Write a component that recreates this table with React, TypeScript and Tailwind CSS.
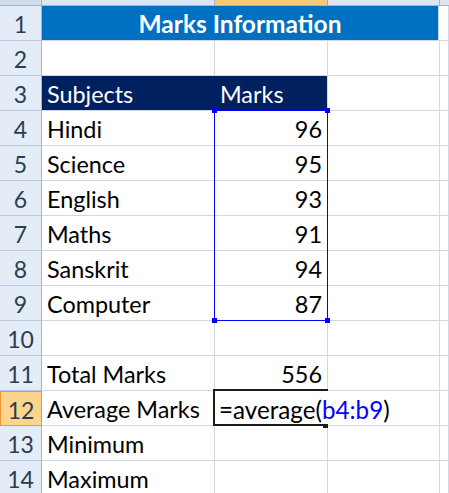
import React from "react";

const font = { fontFamily: "Lato, 'Open Sans', sans-serif" };

type Row = { n: number; a?: string; b?: string };

const rows: Row[] = [
  { n: 4, a: "Hindi", b: "96" },
  { n: 5, a: "Science", b: "95" },
  { n: 6, a: "English", b: "93" },
  { n: 7, a: "Maths", b: "91" },
  { n: 8, a: "Sanskrit", b: "94" },
  { n: 9, a: "Computer", b: "87" },
  { n: 10 },
  { n: 11, a: "Total Marks", b: "556" },
];

function RowHead({ n, active }: { n: number; active?: boolean }) {
  return (
    <div
      className={
        active
          ? "w-[42px] h-[35px] shrink-0 flex items-end justify-center pb-[3px] text-[23px] leading-none bg-[#fdd48c] border border-[#f29436] text-[#2b3d4f]"
          : "w-[42px] h-[35px] shrink-0 flex items-end justify-center pb-[4px] text-[23px] leading-none bg-[#e4ecf7] border-r border-b border-r-[#9eb6ce] border-b-[#b8c9df] text-[#2b3d4f]"
      }
    >
      {n}
    </div>
  );
}

function Cell({ w, children, right }: { w: string; children?: React.ReactNode; right?: boolean }) {
  return (
    <div
      className={`${w} h-[35px] shrink-0 flex items-end pb-[4px] text-[23.4px] leading-none text-black border-r border-b border-[#d0d7e5] whitespace-nowrap ${
        right ? "justify-end pr-[5px]" : "pl-[5px]"
      }`}
    >
      {children}
    </div>
  );
}

export default function App() {
  return (
    <div className="relative w-[449px] h-[493px] overflow-hidden bg-white" style={font}>
      {/* column headers */}
      <div className="flex h-[6px] border-b border-[#9eb6ce]">
        <div className="w-[42px] shrink-0 bg-[#d3ddea] border-r border-[#9eb6ce]" />
        <div className="w-[173px] shrink-0 bg-[#dce6f4] border-r border-[#9eb6ce]" />
        <div className="w-[113px] shrink-0 bg-[#f8c977] border-r border-[#f29436]" />
        <div className="w-[112px] shrink-0 bg-[#dce6f4] border-r border-[#9eb6ce]" />
        <div className="flex-1 bg-[#dce6f4]" />
      </div>

      {/* row 1 */}
      <div className="flex">
        <RowHead n={1} />
        <div className="w-[397px] h-[35px] shrink-0 flex items-end justify-center pb-[4px] bg-[#0070c0] text-white font-bold text-[24.5px] leading-none border-r border-b border-[#d0d7e5]">
          Marks Information
        </div>
        <Cell w="flex-1" />
      </div>

      {/* row 2 */}
      <div className="flex">
        <RowHead n={2} />
        <Cell w="w-[173px]" />
        <Cell w="w-[113px]" />
        <Cell w="w-[112px]" />
        <Cell w="flex-1" />
      </div>

      {/* row 3 */}
      <div className="flex">
        <RowHead n={3} />
        <div className="w-[286px] h-[35px] shrink-0 flex items-end pb-[4px] bg-[#002060] text-white text-[23.4px] leading-none border-r border-b border-[#d0d7e5]">
          <span className="w-[173px] pl-[5px]">Subjects</span>
          <span className="pl-[5px]">Marks</span>
        </div>
        <Cell w="w-[112px]" />
        <Cell w="flex-1" />
      </div>

      {rows.map((r) => (
        <div key={r.n} className="flex">
          <RowHead n={r.n} />
          <Cell w="w-[173px]">{r.a}</Cell>
          <Cell w="w-[113px]" right>
            {r.b}
          </Cell>
          <Cell w="w-[112px]" />
          <Cell w="flex-1" />
        </div>
      ))}

      {/* row 12 */}
      <div className="flex">
        <RowHead n={12} active />
        <Cell w="w-[173px]">Average Marks</Cell>
        <div className="w-[113px] h-[35px] shrink-0 border-b border-[#d0d7e5]" />
        <div className="w-[112px] h-[35px] shrink-0 border-r border-b border-[#d0d7e5]" />
        <Cell w="flex-1" />
      </div>

      {[13, 14].map((n) => (
        <div key={n} className="flex">
          <RowHead n={n} />
          <Cell w="w-[173px]">{n === 13 ? "Minimum" : "Maximum"}</Cell>
          <Cell w="w-[113px]" />
          <Cell w="w-[112px]" />
          <Cell w="flex-1" />
        </div>
      ))}

      {/* range selection B4:B9 */}
      <div className="absolute left-[214px] top-[110px] w-[114px] h-[211px] border border-[#0000ff]">
        <div className="absolute -left-[3px] -top-[3px] w-[5px] h-[5px] bg-[#0000ff]" />
        <div className="absolute -right-[3px] -top-[3px] w-[5px] h-[5px] bg-[#0000ff]" />
        <div className="absolute -left-[3px] -bottom-[3px] w-[5px] h-[5px] bg-[#0000ff]" />
        <div className="absolute -right-[3px] -bottom-[3px] w-[5px] h-[5px] bg-[#0000ff]" />
      </div>

      {/* active cell B12 in edit mode */}
      <div className="absolute left-[213px] top-[389px] w-[115px] h-[37px] border-2 border-r-0 border-[#1a1a1a]" />
      <div className="absolute left-[323px] top-[423px] w-[5px] h-[5px] bg-[#1a1a1a]" />
      <div className="absolute left-[219px] top-[391px] h-[33px] flex items-end pb-[2px] text-[24.2px] leading-none whitespace-nowrap bg-white pr-[1px]">
        <span className="text-black">=average(</span>
        <span className="text-[#0000ff]">b4:b9</span>
        <span className="text-black">)</span>
      </div>
    </div>
  );
}
